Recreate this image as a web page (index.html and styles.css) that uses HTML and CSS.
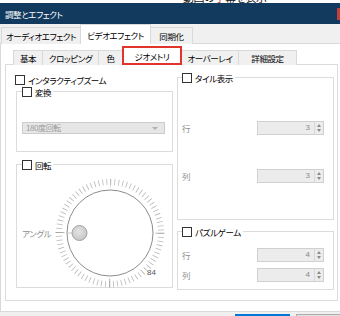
FILE: index.html
```html
<!DOCTYPE html>
<html lang="ja">
<head>
<meta charset="utf-8">
<title>調整とエフェクト</title>
<link rel="stylesheet" href="styles.css">
</head>
<body>
<div class="topstrip"><span class="frag">動画の<span class="red">字</span>幕を表示</span></div>
<div class="titlebar"><span class="title">調整とエフェクト</span><span class="close"></span></div>
<div class="tabs outer-tabs">
  <div class="tab t-audio">オーディオエフェクト</div>
  <div class="tab sel t-video">ビデオエフェクト</div>
  <div class="tab t-sync">同期化</div>
</div>
<div class="pane outer-pane">
  <div class="tabs inner-tabs">
    <div class="tab t-basic">基本</div>
    <div class="tab t-crop">クロッピング</div>
    <div class="tab t-color">色</div>
    <div class="tab sel hl t-geo">ジオメトリ</div>
    <div class="tab t-overlay">オーバーレイ</div>
    <div class="tab t-adv">詳細設定</div>
  </div>
  <div class="pane inner-pane">
    <div class="col col-left">
      <div class="check zoom-check"><span class="box"></span>インタラクティブズーム</div>
      <div class="group g-transform">
        <div class="legend"><span class="box"></span>変換</div>
        <div class="combo"><span>180度回転</span><span class="arrow"></span></div>
      </div>
      <div class="group g-rotate">
        <div class="legend"><span class="box"></span>回転</div>
        <div class="dial-row">
          <span class="lbl angle">アングル</span>
          <svg class="dial" width="120" height="120" viewBox="0 0 120 120">
            <circle cx="60" cy="60" r="51" fill="none" stroke="#b8b8b8" stroke-width="6" stroke-dasharray="0.8 3.206"/>
            <circle cx="60" cy="60" r="50" fill="none" stroke="#a4a4a4" stroke-width="9" stroke-dasharray="0.9 77.64" stroke-dashoffset="0.45" transform="rotate(-90 60 60)"/>
            <circle cx="60" cy="60" r="43" fill="#fff" stroke="#8c8c8c" stroke-width="1"/>
            <line x1="17.5" y1="60" x2="22" y2="60" stroke="#c8c8c8" stroke-width="1"/>
            <defs>
              <radialGradient id="kn" cx="45%" cy="40%" r="60%">
                <stop offset="0" stop-color="#e4e4e4"/>
                <stop offset="1" stop-color="#c6c6c6"/>
              </radialGradient>
            </defs>
            <circle cx="29.5" cy="60" r="7.5" fill="url(#kn)" stroke="#a2a2a2" stroke-width="1"/>
            <text x="97" y="102" class="dialnum">84</text>
          </svg>
        </div>
      </div>
    </div>
    <div class="col col-right">
      <div class="group g-wall">
        <div class="legend"><span class="box"></span>タイル表示</div>
        <div class="row r1"><span class="lbl">行</span><div class="spin"><span class="num">3</span><span class="arrows"><i class="up"></i><i class="down"></i></span></div></div>
        <div class="row r2"><span class="lbl">列</span><div class="spin"><span class="num">3</span><span class="arrows"><i class="up"></i><i class="down"></i></span></div></div>
      </div>
      <div class="group g-puzzle">
        <div class="legend"><span class="box"></span>パズルゲーム</div>
        <div class="row p1"><span class="lbl">行</span><div class="spin"><span class="num">4</span><span class="arrows"><i class="up"></i><i class="down"></i></span></div></div>
        <div class="row p2"><span class="lbl">列</span><div class="spin"><span class="num">4</span><span class="arrows"><i class="up"></i><i class="down"></i></span></div></div>
      </div>
    </div>
  </div>
</div>
<div class="buttons">
  <div class="btn primary"></div>
  <div class="btn"></div>
</div>
</body>
</html>
```
FILE: styles.css
```css
* { box-sizing: border-box; }
html, body { margin: 0; padding: 0; }
body {
  width: 340px;
  height: 316px;
  overflow: hidden;
  background: #f0f0f0;
  font-family: "Noto Sans CJK JP", "Noto Sans", sans-serif;
  font-size: 8.5px;
  letter-spacing: -0.4px;
  line-height: 12px;
  color: #000;
  font-feature-settings: "palt";
}
.topstrip {
  height: 3px;
  background: #fff;
  overflow: hidden;
  padding-left: 183px;
}
.frag {
  display: block;
  font-size: 11px;
  line-height: 11px;
  margin-top: -8px;
  color: #111;
  white-space: nowrap;
}
.frag .red { color: #d8261f; }
.titlebar {
  height: 21px;
  background: #113a5e;
  color: #fff;
  display: flex;
  align-items: center;
  justify-content: space-between;
  padding-left: 5px;
}
.close {
  width: 3px;
  height: 12px;
  background: #c4403a;
}
.tabs { display: flex; align-items: flex-end; }
.outer-tabs { height: 20px; padding-left: 1px; }
.tab {
  height: 17px;
  border: 1px solid #d9d9d9;
  border-bottom: none;
  background: #f0f0f0;
  display: flex;
  align-items: center;
  justify-content: center;
  margin-right: -1px;
  white-space: nowrap;
  flex: none;
}
.tab.sel {
  background: #fff;
  height: 20px;
  position: relative;
  z-index: 1;
}
.t-audio { width: 80px; }
.t-video { width: 71px; }
.t-sync { width: 43px; }
.pane { background: #fff; border: 1px solid #d9d9d9; }
.outer-pane {
  margin-top: -1px;
  height: 269px;
  width: 342px;
}
.inner-tabs { margin-top: 1px; height: 20px; padding-left: 12px; }
.inner-tabs .tab { height: 15px; }
.inner-tabs .tab.sel { height: 19px; }
.t-basic { width: 30px; }
.t-crop { width: 57px; }
.t-color { width: 25px; }
.t-geo { width: 60px; }
.t-overlay { width: 58px; }
.t-adv { width: 59px; }
.tab.hl { border: 2px solid #e3342c; border-bottom: 2px solid #e3342c; }
.inner-pane {
  margin-top: -1px;
  margin-left: 4px;
  width: 333px;
  height: 237px;
  border-color: #dcdcdc;
  display: grid;
  grid-template-columns: 157px 157px;
  column-gap: 4px;
  padding: 9px 0 0 10px;
  align-items: start;
}
.col { display: flex; flex-direction: column; }
.check, .legend { display: flex; align-items: center; gap: 3px; height: 12px; white-space: nowrap; }
.box {
  width: 10px;
  height: 10px;
  border: 1px solid #333;
  background: #fff;
  flex: none;
}
.zoom-check { margin-left: -1px; }
.group { border: 1px solid #dcdcdc; padding: 0 8px 0 5px; }
.legend {
  margin-top: -6px;
  background: #fff;
  align-self: flex-start;
  padding-right: 2px;
  width: max-content;
}
.g-transform { margin-top: 5px; height: 61px; }
.combo {
  margin-top: 24px;
  height: 12px;
  width: 143px;
  background: #e6e6e6;
  border: 1px solid #cccccc;
  color: #9a9a9a;
  display: flex;
  align-items: center;
  justify-content: space-between;
  padding: 0 6px 0 3px;
  font-size: 8px;
}
.arrow {
  width: 0; height: 0;
  border-left: 3px solid transparent;
  border-right: 3px solid transparent;
  border-top: 3px solid #b0b0b0;
}
.g-rotate { margin-top: 12px; height: 124px; }
.dial-row { display: flex; align-items: center; margin-top: 2px; }
.lbl { color: #8f8f8f; white-space: nowrap; }
.angle { width: 28px; flex: none; }
.dial { display: block; flex: none; }
.dialnum { font-size: 8px; fill: #555; font-family: "Liberation Sans", sans-serif; letter-spacing: 0; }
.g-wall { margin-top: 3px; height: 143px; padding-left: 4px; }
.g-puzzle { margin-top: 11px; height: 59px; padding-left: 4px; }
.row { display: flex; align-items: center; justify-content: space-between; padding-right: 1px; }
.r1 { margin-top: 37px; }
.r2 { margin-top: 34px; }
.p1 { margin-top: 10px; }
.p2 { margin-top: 6px; }
.spin {
  width: 67px;
  height: 14px;
  background: #ececec;
  border: 1px solid #d0d0d0;
  display: flex;
  align-items: center;
  justify-content: flex-end;
}
.num { color: #8a8a8a; font-size: 8px; padding-right: 4px; font-family: "Liberation Sans", sans-serif; letter-spacing: 0; }
.arrows {
  width: 9px;
  height: 12px;
  border-left: 1px solid #d8d8d8;
  display: flex;
  flex-direction: column;
  align-items: center;
  justify-content: center;
  gap: 2px;
}
.arrows i { width: 0; height: 0; border-left: 2px solid transparent; border-right: 2px solid transparent; }
.arrows .up { border-bottom: 3px solid #8c8c8c; }
.arrows .down { border-top: 3px solid #8c8c8c; }
.buttons { display: flex; gap: 6px; padding: 2px 0 0 235px; height: 4px; overflow: hidden; }
.btn {
  width: 55px;
  height: 22px;
  flex: none;
  background: #e1e1e1;
  border: 1px solid #adadad;
}
.btn.primary { border: 2px solid #0078d7; }
```
